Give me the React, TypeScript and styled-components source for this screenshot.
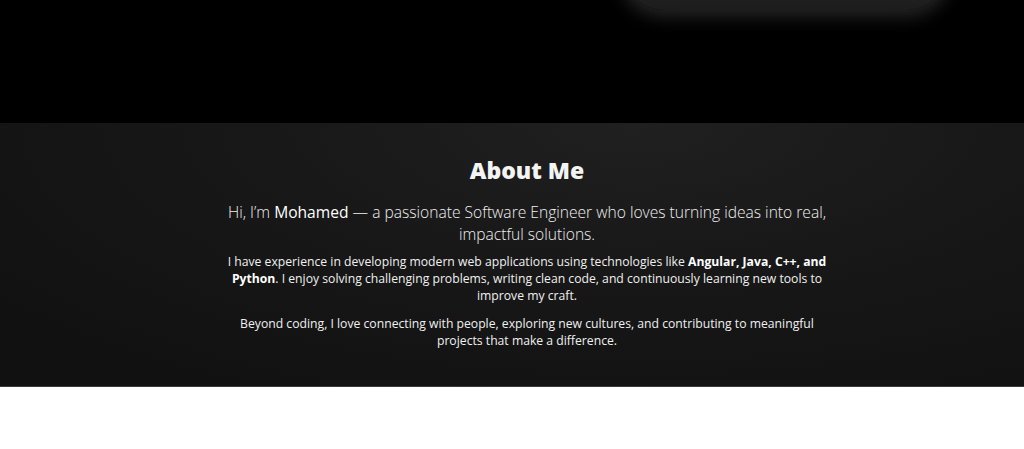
import React from "react";
import styled, { createGlobalStyle } from "styled-components";

const GlobalStyle = createGlobalStyle`
  * {
    box-sizing: border-box;
  }
  body {
    margin: 0;
    background: #ffffff;
    font-family: "Open Sans", "Liberation Sans", sans-serif;
  }
`;

const PARAGRAPHS = [
  {
    key: "experience",
    content: (
      <>
        I have experience in developing modern web applications using
        technologies like <strong>Angular, Java, C++, and</strong>{" "}
        <strong>Python</strong>. I enjoy solving challenging problems, writing
        clean code, and continuously learning new tools to improve my craft.
      </>
    ),
  },
  {
    key: "beyond",
    content: (
      <>
        Beyond coding, I love connecting with people, exploring new cultures,
        and contributing to meaningful projects that make a difference.
      </>
    ),
  },
];

const App = () => {
  return (
    <Page>
      <GlobalStyle />
      <Hero>
        <HeroPhoto />
      </Hero>

      <AboutSection>
        <AboutInner>
          <Title>About Me</Title>
          <Intro>
            Hi, I’m <Name>Mohamed</Name> — a passionate Software Engineer who
            loves turning ideas into real, impactful solutions.
          </Intro>
          {PARAGRAPHS.map((p) => (
            <Paragraph key={p.key}>{p.content}</Paragraph>
          ))}
        </AboutInner>
      </AboutSection>

      <Footer />
    </Page>
  );
};

const Page = styled.main`
  width: 100%;
  min-height: 449px;
  display: flex;
  flex-direction: column;
  background: #ffffff;
`;
const Hero = styled.section`
  height: 123px;
  background: #000000;
  display: flex;
  justify-content: flex-end;
  align-items: flex-start;
  padding-right: 79px;
  overflow: hidden;
`;
const HeroPhoto = styled.div`
  width: 320px;
  height: 60px;
  margin-top: -50px;
  border-radius: 0 0 38px 38px;
  background: linear-gradient(180deg, #2e2e2e 0%, #1c1c1c 100%);
  box-shadow: 0 0 18px 6px rgba(120, 120, 120, 0.32);
`;
const AboutSection = styled.section`
  height: 264px;
  padding: 32px 0 0 30px;
  display: flex;
  justify-content: center;
  background: radial-gradient(
    ellipse 80% 120% at 62% 0%,
    #202020 0%,
    #181818 45%,
    #111111 100%
  );
  border-bottom: 1px solid #3a3a3a;
`;
const AboutInner = styled.div`
  width: 610px;
  display: flex;
  flex-direction: column;
  align-items: center;
  text-align: center;
  color: #f2f2f2;
`;
const Title = styled.h2`
  margin: 0 0 16px;
  font-size: 23px;
  font-weight: 800;
  line-height: 30px;
  color: #f4f4f4;
`;
const Intro = styled.p`
  margin: 0 0 8px;
  font-size: 15.6px;
  font-weight: 300;
  line-height: 22px;
  color: #f0f0f0;
`;
const Name = styled.span`
  font-weight: 500;
  color: #ffffff;
`;
const Paragraph = styled.p`
  margin: 0 0 11px;
  font-size: 12.2px;
  font-weight: 400;
  line-height: 17px;
  color: #f0f0f0;

  strong {
    font-weight: 700;
    color: #ffffff;
  }
`;
const Footer = styled.div`
  flex: 1;
  background: #ffffff;
`;

export default App;
